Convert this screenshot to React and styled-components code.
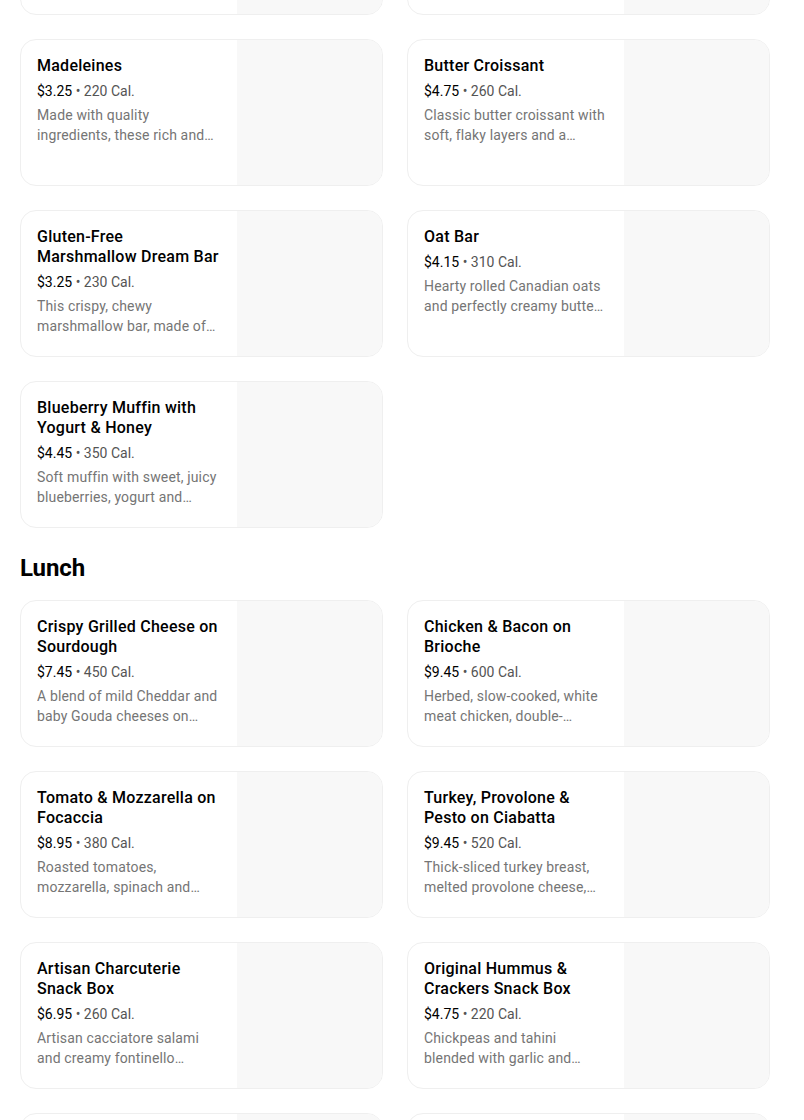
import styled, { createGlobalStyle } from "styled-components";

const GlobalStyle = createGlobalStyle`
  html, body {
    margin: 0;
    padding: 0;
    background: #ffffff;
    overflow: hidden;
  }
  body {
    font-family: Roboto, "Liberation Sans", sans-serif;
    color: #000000;
  }
`;

const Page = styled.div`
  width: 750px;
  padding: 0 20px;
  margin-top: -132px;
`;

const Section = styled.section`
  display: flex;
  flex-direction: column;
  margin-bottom: 24px;
`;

const Heading = styled.h2`
  margin: 0 0 16px;
  font-size: 24px;
  line-height: 32px;
  font-weight: 700;
  letter-spacing: -0.1px;
`;

const Grid = styled.div`
  display: grid;
  grid-template-columns: 363px 363px;
  gap: 24px;
`;

const Card = styled.div`
  display: flex;
  height: 147px;
  box-sizing: border-box;
  border: 1px solid #efefef;
  border-radius: 16px;
  overflow: hidden;
  background: #fff;
`;

const Info = styled.div`
  flex: 1;
  min-width: 0;
  padding: 16px 16px 14px;
  display: flex;
  flex-direction: column;
  gap: 4px;
`;

const Title = styled.div`
  font-size: 16px;
  line-height: 20px;
  font-weight: 500;
  color: #000;
  letter-spacing: 0.25px;
  margin-bottom: 1px;
`;

const Meta = styled.div`
  font-size: 14px;
  line-height: 20px;
  color: #545454;
`;

const Price = styled.span`
  color: #000;
`;

const Desc = styled.div`
  font-size: 14px;
  line-height: 20px;
  color: #757575;
  letter-spacing: 0.15px;
  display: -webkit-box;
  -webkit-line-clamp: 2;
  -webkit-box-orient: vertical;
  overflow: hidden;
`;

const Photo = styled.div`
  width: 145px;
  flex-shrink: 0;
  background: #f8f8f8;
`;

const previous = [
  { title: "Plain Bagel", price: "$2.75", cal: "270 Cal.", desc: "" },
  { title: "Cinnamon Roll", price: "$3.95", cal: "420 Cal.", desc: "" },
];

const bakery = [
  {
    title: "Madeleines",
    price: "$3.25",
    cal: "220 Cal.",
    desc: "Made with quality ingredients, these rich and…",
  },
  {
    title: "Butter Croissant",
    price: "$4.75",
    cal: "260 Cal.",
    desc: "Classic butter croissant with soft, flaky layers and a…",
  },
  {
    title: "Gluten-Free Marshmallow Dream Bar",
    price: "$3.25",
    cal: "230 Cal.",
    desc: "This crispy, chewy marshmallow bar, made of…",
  },
  {
    title: "Oat Bar",
    price: "$4.15",
    cal: "310 Cal.",
    desc: "Hearty rolled Canadian oats and perfectly creamy butte…",
  },
  {
    title: "Blueberry Muffin with Yogurt & Honey",
    price: "$4.45",
    cal: "350 Cal.",
    desc: "Soft muffin with sweet, juicy blueberries, yogurt and…",
  },
];

const lunch = [
  {
    title: "Crispy Grilled Cheese on Sourdough",
    price: "$7.45",
    cal: "450 Cal.",
    desc: "A blend of mild Cheddar and baby Gouda cheeses on…",
  },
  {
    title: "Chicken & Bacon on Brioche",
    price: "$9.45",
    cal: "600 Cal.",
    desc: "Herbed, slow-cooked, white meat chicken, double-…",
  },
  {
    title: "Tomato & Mozzarella on Focaccia",
    price: "$8.95",
    cal: "380 Cal.",
    desc: "Roasted tomatoes, mozzarella, spinach and…",
  },
  {
    title: "Turkey, Provolone & Pesto on Ciabatta",
    price: "$9.45",
    cal: "520 Cal.",
    desc: "Thick-sliced turkey breast, melted provolone cheese,…",
  },
  {
    title: "Artisan Charcuterie Snack Box",
    price: "$6.95",
    cal: "260 Cal.",
    desc: "Artisan cacciatore salami and creamy fontinello…",
  },
  {
    title: "Original Hummus & Crackers Snack Box",
    price: "$4.75",
    cal: "220 Cal.",
    desc: "Chickpeas and tahini blended with garlic and…",
  },
  { title: "Egg Salad Sandwich", price: "$6.45", cal: "410 Cal.", desc: "" },
  { title: "Ham & Swiss on Baguette", price: "$8.45", cal: "480 Cal.", desc: "" },
];

function MenuCard({ item }) {
  return (
    <Card>
      <Info>
        <Title>{item.title}</Title>
        <Meta>
          <Price>{item.price}</Price> • {item.cal}
        </Meta>
        <Desc>{item.desc}</Desc>
      </Info>
      <Photo />
    </Card>
  );
}

export default function App() {
  return (
    <>
      <GlobalStyle />
      <Page>
        <Section>
          <Grid>
            {previous.concat(bakery).map((item) => (
              <MenuCard key={item.title} item={item} />
            ))}
          </Grid>
        </Section>
        <Section>
          <Heading>Lunch</Heading>
          <Grid>
            {lunch.map((item) => (
              <MenuCard key={item.title} item={item} />
            ))}
          </Grid>
        </Section>
      </Page>
    </>
  );
}
